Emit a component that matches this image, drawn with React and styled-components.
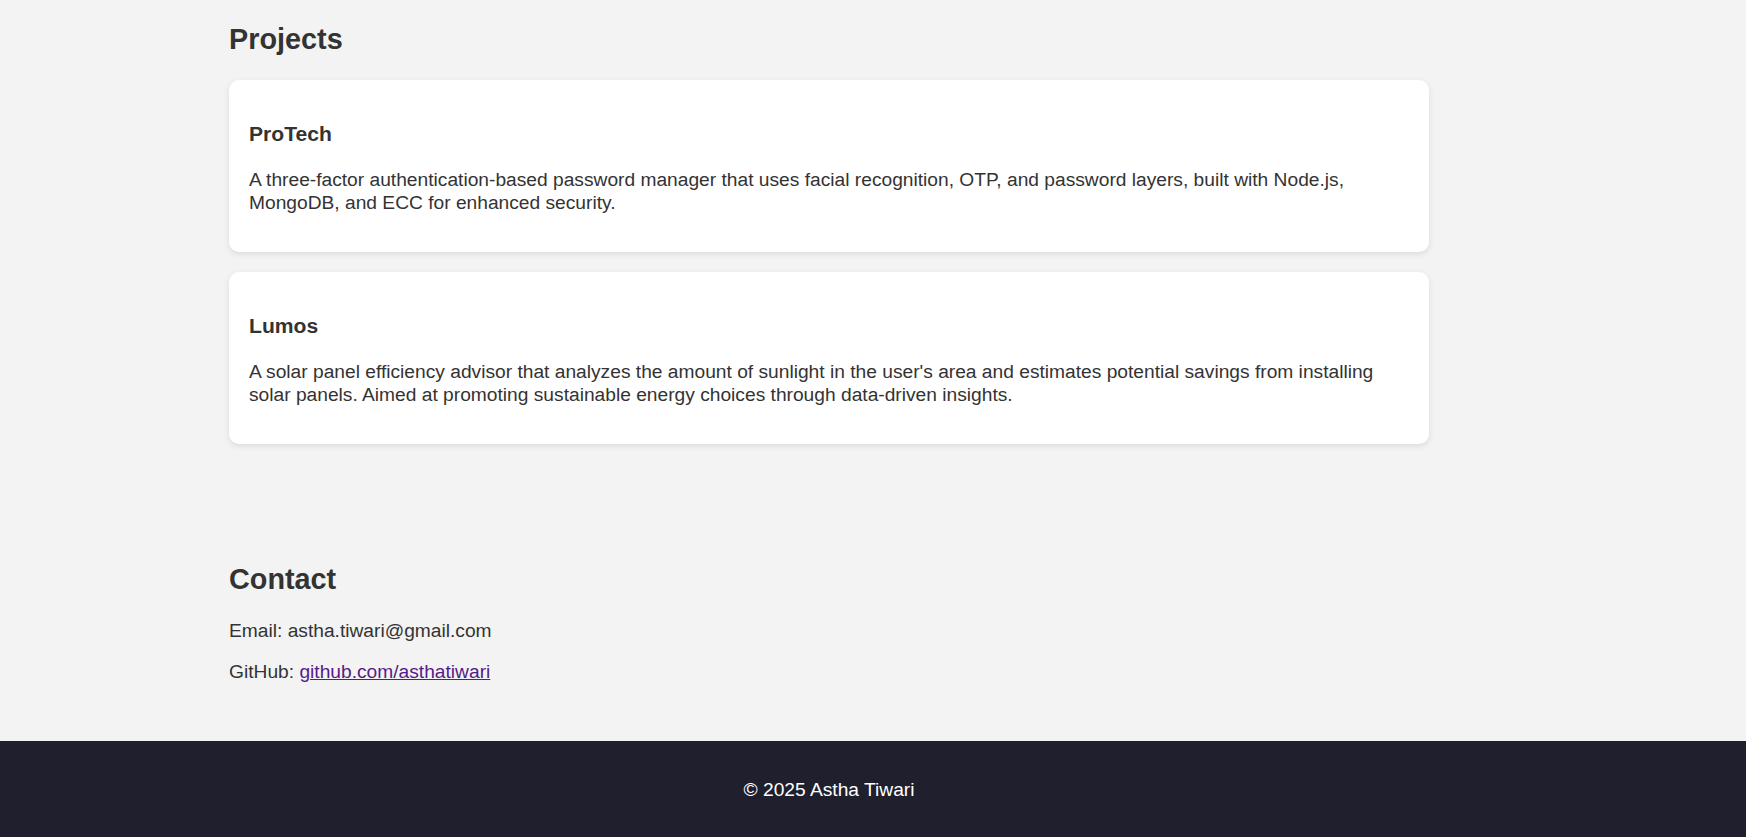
import React from 'react'
import styled, {createGlobalStyle} from 'styled-components'

const GlobalStyle = createGlobalStyle`
  body {
    margin: 0;
    background: #f3f3f3;
    color: #333333;
    font-family: "Liberation Sans", Arial, sans-serif;
    font-size: 19.2px;
  }
`

const Main = styled.main`
  width: 1200px;
  margin-left: 229px;
`

const Section = styled.section`
  padding-top: ${props => props.$top}px;
  padding-bottom: ${props => props.$bottom}px;
`

const SectionTitle = styled.h2`
  margin: 0 0 24px;
  font-size: 28.8px;
  font-weight: 700;
`

const ProjectList = styled.div`
  display: flex;
  flex-direction: column;
  gap: 20px;
  margin-top: 2px;
`

const Card = styled.article`
  background: #ffffff;
  border-radius: 10px;
  padding: 20px;
  box-shadow: 0 2px 6px rgba(0, 0, 0, 0.1);
`

const CardTitle = styled.h3`
  margin: 22px 0 21.5px;
  font-size: 21.1px;
  font-weight: 700;
`

const CardText = styled.p`
  margin: 0 0 18.6px;
  line-height: 23px;
`

const ContactLine = styled.p`
  margin: 19.2px 0;
  line-height: normal;
`

const Link = styled.a`
  color: #551a8b;
`

const Footer = styled.footer`
  background: #1f1f2e;
  color: #ffffff;
  padding: 38px 0 44px;
`

const FooterInner = styled.div`
  width: 1200px;
  margin-left: 229px;
  text-align: center;
`

const projects = [
  {
    name: 'ProTech',
    text: 'A three-factor authentication-based password manager that uses facial recognition, OTP, and password layers, built with Node.js, MongoDB, and ECC for enhanced security.',
  },
  {
    name: 'Lumos',
    text: "A solar panel efficiency advisor that analyzes the amount of sunlight in the user's area and estimates potential savings from installing solar panels. Aimed at promoting sustainable energy choices through data-driven insights.",
  },
]

const App = () => (
  <>
    <GlobalStyle />
    <Main>
      <Section $top={23} $bottom={98}>
        <SectionTitle>Projects</SectionTitle>
        <ProjectList>
          {projects.map(project => (
            <Card key={project.name}>
              <CardTitle>{project.name}</CardTitle>
              <CardText>{project.text}</CardText>
            </Card>
          ))}
        </ProjectList>
      </Section>
      <Section $top={21} $bottom={38}>
        <SectionTitle>Contact</SectionTitle>
        <ContactLine>Email: astha.tiwari@gmail.com</ContactLine>
        <ContactLine>
          GitHub: <Link href="#github">github.com/asthatiwari</Link>
        </ContactLine>
      </Section>
    </Main>
    <Footer>
      <FooterInner>© 2025 Astha Tiwari</FooterInner>
    </Footer>
  </>
)

export default App
